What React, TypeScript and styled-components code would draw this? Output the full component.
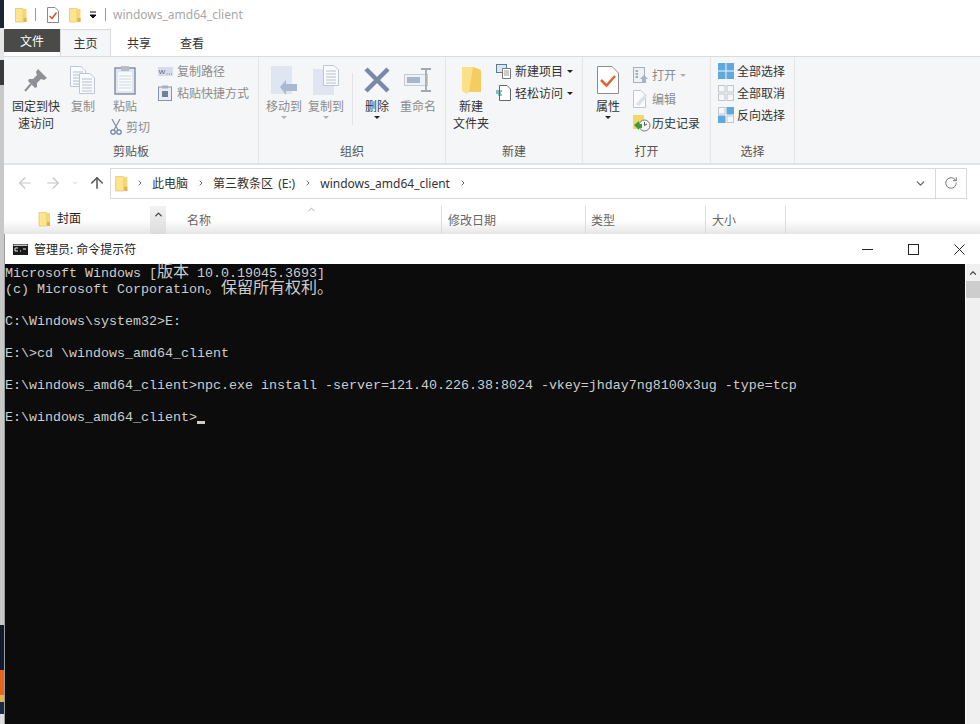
import React from 'react';
import styled, { createGlobalStyle } from 'styled-components';
import { ArrowLeft, ArrowRight, ArrowUp, ChevronDown, ChevronRight, ChevronUp, RotateCw } from 'lucide-react';

const GlobalStyle = createGlobalStyle`
     html, body {
          margin: 0;
          padding: 0;
          background: #0c0c0c;
          overflow: hidden;
     }

     * {
          box-sizing: border-box;
     }
`;

const uiFont = `"Noto Sans", "Noto Sans CJK SC", sans-serif`;

const Page = styled.div`
     display: flex;
     width: 980px;
     height: 724px;
     overflow: hidden;
     font-family: ${uiFont};
     font-size: 12px;
     color: #333;
`;

// sliver of the desktop on the left edge
const DesktopStrip = styled.div`
     flex: 0 0 4px;
     background: linear-gradient(
          #1a2636 0 28px,
          #e6e6e6 28px 60px,
          #3a3a3a 60px 85px,
          #c8c8c8 85px 625px,
          #111a28 625px 670px,
          #e8641c 670px 695px,
          #e8b34a 695px 702px,
          #1a2a44 702px 714px,
          #dddddd 714px
     );
`;

const Main = styled.div`
     flex: 1;
     min-width: 0;
     display: flex;
     flex-direction: column;
`;

const Explorer = styled.div`
     flex: 0 0 234px;
     background: #fff;
     display: flex;
     flex-direction: column;
`;

const TitleBar = styled.div`
     flex: 0 0 29px;
     display: flex;
     align-items: center;
     padding-left: 11px;
`;

const QuickItem = styled.span<{ $gap: number }>`
     display: inline-flex;
     margin-right: ${(p) => p.$gap}px;
`;

const QuickSep = styled.span<{ $gap: number }>`
     width: 1px;
     height: 13px;
     background: #9a9a9a;
     margin-right: ${(p) => p.$gap}px;
`;

const WindowName = styled.span`
     color: #a8a8a8;
     font-size: 12px;
`;

const TabRow = styled.div`
     flex: 0 0 26px;
     display: flex;
     align-items: flex-start;
     position: relative;
     z-index: 1;
`;

const FileTab = styled.div`
     width: 56px;
     height: 23px;
     background: #4a4a48;
     color: #fff;
     display: flex;
     align-items: center;
     justify-content: center;
`;

const Tab = styled.div<{ $active?: boolean; $width: number }>`
     width: ${(p) => p.$width}px;
     height: ${(p) => (p.$active ? 27 : 26)}px;
     display: flex;
     align-items: center;
     justify-content: center;
     color: #333;
     background: ${(p) => (p.$active ? '#f5f6f7' : 'transparent')};
     border: 1px solid ${(p) => (p.$active ? '#dadbdc' : 'transparent')};
     border-bottom: none;
`;

const Ribbon = styled.div`
     flex: 0 0 109px;
     display: flex;
     background: #f5f6f7;
     border-top: 1px solid #dadbdc;
     border-bottom: 2px solid #e2e3e4;
`;

const Group = styled.div<{ $width: number }>`
     width: ${(p) => p.$width}px;
     display: flex;
     flex-direction: column;
     border-right: 1px solid #e4e5e6;
`;

const GroupBody = styled.div<{ $left?: number }>`
     flex: 1;
     min-height: 0;
     display: flex;
     padding: 3px 0 0 ${(p) => p.$left ?? 0}px;
`;

const GroupLabel = styled.div`
     flex: 0 0 21px;
     text-align: center;
     line-height: 20px;
     color: #555;
`;

const LargeButton = styled.div<{ $width: number; $disabled?: boolean }>`
     width: ${(p) => p.$width}px;
     display: flex;
     flex-direction: column;
     align-items: center;
     color: ${(p) => (p.$disabled ? '#8c8c8c' : '#333')};
`;

const LargeIcon = styled.div`
     height: 40px;
     display: flex;
     align-items: center;
     justify-content: center;
`;

const LargeText = styled.div`
     margin-top: -2px;
     line-height: 17px;
     text-align: center;
     white-space: nowrap;
`;

const Caret = styled.span<{ $light?: boolean }>`
     display: block;
     width: 0;
     height: 0;
     border-left: 3px solid transparent;
     border-right: 3px solid transparent;
     border-top: 3px solid ${(p) => (p.$light ? '#b0b0b0' : '#222')};
`;

const ButtonCaret = styled(Caret)`
     margin-top: 1px;
`;

const SmallColumn = styled.div<{ $left?: number; $top?: number; $rowHeight: number }>`
     display: flex;
     flex-direction: column;
     margin-left: ${(p) => p.$left ?? 0}px;
     padding-top: ${(p) => p.$top ?? 0}px;

     > div {
          height: ${(p) => p.$rowHeight}px;
     }
`;

const SmallRow = styled.div<{ $disabled?: boolean; $gap?: number }>`
     display: flex;
     align-items: center;
     gap: ${(p) => p.$gap ?? 4}px;
     white-space: nowrap;
     color: ${(p) => (p.$disabled ? '#8c8c8c' : '#333')};
`;

const PasteColumn = styled.div`
     width: 50px;
     display: flex;
     flex-direction: column;
     align-items: center;
`;

const CutRow = styled(SmallRow)`
     margin: 3px 0 0 10px;
     height: 18px;
`;

const RibbonSep = styled.div`
     width: 1px;
     height: 52px;
     margin: 13px 3px 0 5px;
     background: #e2e3e4;
`;

const AddressRow = styled.div`
     flex: 0 0 41px;
     display: flex;
     align-items: center;
     padding: 0 13px 5px 12px;
     gap: 10px;
     color: #c4c4c4;
`;

const AddressBox = styled.div`
     flex: 1;
     height: 31px;
     margin-left: -6px;
     border: 1px solid #d9d9d9;
     display: flex;
     align-items: center;
     padding-left: 4px;
     gap: 8px;
     color: #333;
`;

const Crumb = styled.span`
     white-space: nowrap;
     padding-right: 1px;
     word-spacing: 2px;
`;

const AddressEnd = styled.div`
     margin-left: auto;
     display: flex;
     align-items: center;
     height: 100%;
     color: #666;
`;

const HistoryToggle = styled.div`
     width: 29px;
     display: flex;
     justify-content: center;
`;

const RefreshBox = styled.div`
     width: 31px;
     height: 100%;
     border-left: 1px solid #d9d9d9;
     display: flex;
     align-items: center;
     justify-content: center;
     color: #666;
`;

const ListHeader = styled.div`
     flex: 1;
     display: flex;
     background: linear-gradient(#fff 50%, #e6e6e6);
`;

const Sidebar = styled.div`
     width: 146px;
     display: flex;
     align-items: flex-start;
     gap: 6px;
     padding: 5px 0 0 34px;
     color: #222;
     line-height: 16px;
`;

const SideScroll = styled.div`
     width: 16px;
     padding-top: 3px;
     background: linear-gradient(#f2f2f2, #dcdcdc);
     display: flex;
     justify-content: center;
     color: #444;
`;

const Column = styled.div<{ $width: number; $pad: number }>`
     position: relative;
     width: ${(p) => p.$width}px;
     padding-left: ${(p) => p.$pad}px;
     display: flex;
     align-items: center;
     color: #666;
     border-right: 1px solid #dcdcdc;
`;

const SortMark = styled.span`
     position: absolute;
     left: 140px;
     top: -2px;
     display: flex;
     color: #8a8a8a;
`;

const Console = styled.div`
     flex: 1;
     min-height: 0;
     display: flex;
     flex-direction: column;
     background: #fff;
     border-left: 1px solid #9c9c9c;
`;

const ConsoleTitle = styled.div`
     flex: 0 0 30px;
     display: flex;
     align-items: center;
     padding-left: 8px;
     gap: 6px;
     color: #222;
`;

const WindowControls = styled.div`
     margin-left: auto;
     display: flex;
     height: 100%;
`;

const ControlButton = styled.div`
     width: 46px;
     padding-left: 4px;
     display: flex;
     align-items: center;
     justify-content: center;
`;

const ConsoleBody = styled.div`
     flex: 1;
     min-height: 0;
     display: flex;
`;

const Screen = styled.div`
     flex: 1;
     padding-top: 2px;
     background: #0c0c0c;
     color: #cccccc;
     font-family: "Liberation Mono", "Noto Sans CJK SC", monospace;
     font-size: 13.333px;
`;

const Line = styled.div`
     height: 16px;
     line-height: 16px;
     white-space: pre;
`;

// line-height 0 keeps the CJK font from pushing the baseline down
const Cjk = styled.span`
     font-family: "Noto Sans CJK SC", sans-serif;
     font-size: 16px;
     line-height: 0;
`;

const Cursor = styled.span`
     display: inline-block;
     width: 8px;
     height: 3px;
     vertical-align: -3px;
     background: #ccc;
`;

const ScrollBar = styled.div`
     flex: 0 0 15px;
     background: #f0f0f0;
     border-left: 1px solid #fff;
     display: flex;
     flex-direction: column;
`;

const ScrollArrow = styled.div`
     height: 17px;
     display: flex;
     align-items: center;
     justify-content: center;
     color: #555;
`;

const ScrollThumb = styled.div`
     height: 17px;
     background: #cdcdcd;
`;

const FolderIcon = ({ w = 12, h = 16 }: { w?: number; h?: number }) => (
     <svg width={w} height={h} viewBox='0 0 12 16'>
          <path d='M0.5 1.5 H8 V15 H0.5 Z' fill='#fde58f' stroke='#e6c56e' strokeWidth='0.8' />
          <path d='M8 2 H11.5 V15 H8 Z' fill='#f6d774' />
          <path d='M8.5 11 H11.5 V15 H8.5 Z' fill='#e0b24d' />
     </svg>
);

const CheckDoc = () => (
     <svg width='12' height='16' viewBox='0 0 12 16'>
          <path d='M0.5 0.5 H8 L11.5 4 V15.5 H0.5 Z' fill='#fff' stroke='#8a8a8a' />
          <path d='M2.5 9 L5 11.5 L9.5 5.5' fill='none' stroke='#d9562b' strokeWidth='1.5' />
     </svg>
);

const PinIcon = () => (
     <svg width='24' height='24' viewBox='0 0 24 24'>
          <path d='M14 1 L23 10 L20 12 L17 11 L13 15 L13 19 L11 20 L4 13 L5 11 L9 11 L13 7 L12 4 Z' fill='#8e9096' />
          <path d='M7 16 L1 23' stroke='#8e9096' strokeWidth='2' />
     </svg>
);

const Pages = ({ x, y }: { x: number; y: number }) => (
     <g transform={`translate(${x} ${y})`}>
          <path d='M0.5 0.5 H11 L15.5 5 V20.5 H0.5 Z' fill='#fafbfd' stroke='#bcc6d6' />
          <path d='M3 6 H13 M3 9 H13 M3 12 H13 M3 15 H13 M3 18 H13' stroke='#b4bfd0' strokeWidth='1' />
     </g>
);

const CopyIcon = () => (
     <svg width='26' height='28' viewBox='0 0 26 28'>
          <Pages x={0} y={0} />
          <Pages x={9} y={7} />
     </svg>
);

const PasteIcon = () => (
     <svg width='22' height='30' viewBox='0 0 22 30'>
          <rect x='1' y='3' width='20' height='26' fill='#dfe6f2' stroke='#7f8ba0' strokeWidth='1.4' />
          <rect x='4' y='7' width='14' height='19' fill='#f8fafd' />
          <path d='M5 11 H17 M5 14 H17 M5 17 H17 M5 20 H17 M5 23 H17' stroke='#cfd8e6' />
          <rect x='7' y='1' width='8' height='5' fill='#b9bdc4' />
     </svg>
);

const ScissorsIcon = () => (
     <svg width='12' height='16' viewBox='0 0 12 16'>
          <path d='M2 0 L8 11 M10 0 L4 11' stroke='#8b93a2' strokeWidth='1.3' fill='none' />
          <circle cx='3' cy='13' r='2.2' fill='none' stroke='#6f88ab' strokeWidth='1.3' />
          <circle cx='9' cy='13' r='2.2' fill='none' stroke='#6f88ab' strokeWidth='1.3' />
     </svg>
);

const PathIcon = () => (
     <svg width='15' height='9' viewBox='0 0 15 9'>
          <rect width='15' height='9' fill='#d6dcea' />
          <path d='M1 3 L2.5 7 L4 3 L5.5 7 L7 3 M8.5 7 H9.5 M11 7 H12 M13 7 H14' stroke='#6e7484' fill='none' strokeWidth='0.8' />
     </svg>
);

const ShortcutIcon = () => (
     <svg width='14' height='16' viewBox='0 0 14 16'>
          <rect x='0.5' y='2' width='13' height='13.5' fill='#e8edf5' stroke='#8a96a8' />
          <rect x='4' y='0.5' width='6' height='3' fill='#a9b0bb' />
          <rect x='4' y='6' width='6' height='6' fill='#6f8199' />
     </svg>
);

const MoveIcon = () => (
     <svg width='27' height='29' viewBox='0 0 27 29'>
          <rect width='21' height='28' fill='#dfe6f1' />
          <path d='M9 21 L15 14 V18 H26 V25 H15 V29 Z' fill='#a9b9cf' />
     </svg>
);

const CopyToIcon = () => (
     <svg width='27' height='30' viewBox='0 0 27 30'>
          <rect y='4' width='21' height='26' fill='#dfe6f1' />
          <Pages x={10} y={0} />
     </svg>
);

const DeleteIcon = () => (
     <svg width='26' height='26' viewBox='0 0 26 26'>
          <path d='M2 2 L24 24 M24 2 L2 24' stroke='#7b87a8' strokeWidth='4.5' />
     </svg>
);

const RenameIcon = () => (
     <svg width='28' height='24' viewBox='0 0 28 24'>
          <rect x='0.5' y='6.5' width='23' height='11' fill='#eef1f6' stroke='#c5ccd8' />
          <rect x='3' y='9' width='13' height='6' fill='#a9b6cc' />
          <path d='M17 1 H27 M22 1 V23 M17 23 H27' stroke='#a3a8b0' strokeWidth='1.8' fill='none' />
     </svg>
);

const NewFolderIcon = () => (
     <svg width='19' height='27' viewBox='0 0 19 27'>
          <path d='M0 0 H11 L19 3 V25 L7 25 L5 27 L0 24 Z' fill='#fbe08a' />
          <path d='M11 0 L19 3 V25 H7 Z' fill='#f4cc60' />
     </svg>
);

const NewItemIcon = () => (
     <svg width='15' height='15' viewBox='0 0 15 15'>
          <rect x='0.5' y='0.5' width='10' height='8' fill='#d7e6f5' stroke='#5c7a94' />
          <path d='M6.5 4.5 H14.5 V14.5 H6.5 Z' fill='#fff' stroke='#777' />
          <path d='M8 7 H13 M8 9 H13 M8 11 H13' stroke='#999' />
     </svg>
);

const EasyAccessIcon = () => (
     <svg width='15' height='16' viewBox='0 0 15 16'>
          <path d='M3.5 0.5 H11 L14.5 4 V15.5 H3.5 Z' fill='#fff' stroke='#666' />
          <path d='M0 6 H6 M0 8 H5 M2 10 H6' stroke='#1e7b8c' strokeWidth='1.1' />
     </svg>
);

const PropertiesIcon = () => (
     <svg width='22' height='28' viewBox='0 0 22 28'>
          <path d='M0.5 0.5 H15 L21.5 7 V27.5 H0.5 Z' fill='#fff' stroke='#8c8c8c' />
          <path d='M4 14 L9.5 19.5 L18 10' fill='none' stroke='#d9693a' strokeWidth='2.6' />
     </svg>
);

const OpenIcon = () => (
     <svg width='15' height='16' viewBox='0 0 15 16'>
          <rect x='0.5' y='0.5' width='11' height='15' fill='#eef1f6' stroke='#a9afb9' />
          <path d='M2.5 4 H5 M2.5 7 H5 M2.5 10 H5' stroke='#8d97a8' strokeWidth='1.4' />
          <path d='M11 8 L15 12 H13 V16 H9 V12 H7 Z' fill='#a9b3c2' />
     </svg>
);

const EditIcon = () => (
     <svg width='15' height='18' viewBox='0 0 15 18'>
          <path d='M0.5 0.5 H8 L12.5 5 V17.5 H0.5 Z' fill='#fbfcfe' stroke='#bcc6d6' />
          <path d='M3 14 L11 5 L14 7 L6 16 Z' fill='#d8e1ee' />
     </svg>
);

const HistoryIcon = () => (
     <svg width='18' height='17' viewBox='0 0 18 17'>
          <rect width='11' height='14' fill='#f2d76d' />
          <circle cx='11.5' cy='10.5' r='5.5' fill='#f4f4f4' stroke='#777' />
          <path d='M11.5 7 V10.5 L14 9' stroke='#555' fill='none' />
          <path d='M1 10 L6 6 V9 H9 V13 H6 V15 Z' fill='#3f9a3c' />
     </svg>
);

const Tiles = ({ on, off }: { on: number[]; off: number[] }) => (
     <svg width='16' height='16' viewBox='0 0 16 16'>
          {[0, 1, 2, 3].map((i) => {
               const x = i % 2 === 0 ? 0 : 8.5;
               const y = i < 2 ? 0 : 8.5;
               return on.includes(i) ? (
                    <rect key={i} x={x} y={y} width='7.5' height='7.5' fill='#5fa9de' />
               ) : off.includes(i) ? (
                    <rect key={i} x={x + 0.5} y={y + 0.5} width='6.5' height='6.5' fill='none' stroke='#c2c6cc' />
               ) : null;
          })}
     </svg>
);

const ConsoleIcon = () => (
     <svg width='15' height='11' viewBox='0 0 15 11'>
          <rect width='15' height='11' fill='#1a1a1a' />
          <rect x='0.5' y='0.5' width='14' height='1.5' fill='#c4c4c4' />
          <path d='M2 4 H5 M2 7 H5 M2 4 V7 M7 7 H8 M10 5 H13' stroke='#e8e8e8' strokeWidth='1' />
     </svg>
);

const App: React.FC = () => {
     return (
          <Page>
               <GlobalStyle />
               <DesktopStrip />
               <Main>
                    <Explorer>
                         <TitleBar>
                              <QuickItem $gap={8}><FolderIcon /></QuickItem>
                              <QuickSep $gap={11} />
                              <QuickItem $gap={10}><CheckDoc /></QuickItem>
                              <QuickItem $gap={8}><FolderIcon /></QuickItem>
                              <QuickItem $gap={8}>
                                   <svg width='8' height='8' viewBox='0 0 8 8'>
                                        <path d='M1 1 H7 M1 4 H7 L4 7 Z' stroke='#111' fill='#111' />
                                   </svg>
                              </QuickItem>
                              <QuickSep $gap={7} />
                              <WindowName>windows_amd64_client</WindowName>
                         </TitleBar>

                         <TabRow>
                              <FileTab>文件</FileTab>
                              <Tab $active $width={51}>主页</Tab>
                              <Tab $width={56}>共享</Tab>
                              <Tab $width={50}>查看</Tab>
                         </TabRow>

                         <Ribbon>
                              <Group $width={255}>
                                   <GroupBody $left={2}>
                                        <LargeButton $width={60}>
                                             <LargeIcon><PinIcon /></LargeIcon>
                                             <LargeText>固定到快<br />速访问</LargeText>
                                        </LargeButton>
                                        <LargeButton $width={34} $disabled>
                                             <LargeIcon><CopyIcon /></LargeIcon>
                                             <LargeText>复制</LargeText>
                                        </LargeButton>
                                        <PasteColumn>
                                             <LargeButton $width={50} $disabled>
                                                  <LargeIcon><PasteIcon /></LargeIcon>
                                                  <LargeText>粘贴</LargeText>
                                             </LargeButton>
                                             <CutRow $disabled>
                                                  <ScissorsIcon />
                                                  <span>剪切</span>
                                             </CutRow>
                                        </PasteColumn>
                                        <SmallColumn $left={8} $rowHeight={22}>
                                             <SmallRow $disabled><PathIcon /><span>复制路径</span></SmallRow>
                                             <SmallRow $disabled $gap={5}><ShortcutIcon /><span>粘贴快捷方式</span></SmallRow>
                                        </SmallColumn>
                                   </GroupBody>
                                   <GroupLabel>剪贴板</GroupLabel>
                              </Group>

                              <Group $width={187}>
                                   <GroupBody $left={4}>
                                        <LargeButton $width={42} $disabled>
                                             <LargeIcon><MoveIcon /></LargeIcon>
                                             <LargeText>移动到</LargeText>
                                             <ButtonCaret $light />
                                        </LargeButton>
                                        <LargeButton $width={42} $disabled>
                                             <LargeIcon><CopyToIcon /></LargeIcon>
                                             <LargeText>复制到</LargeText>
                                             <ButtonCaret $light />
                                        </LargeButton>
                                        <RibbonSep />
                                        <LargeButton $width={42}>
                                             <LargeIcon><DeleteIcon /></LargeIcon>
                                             <LargeText>删除</LargeText>
                                             <ButtonCaret />
                                        </LargeButton>
                                        <LargeButton $width={40} $disabled>
                                             <LargeIcon><RenameIcon /></LargeIcon>
                                             <LargeText>重命名</LargeText>
                                        </LargeButton>
                                   </GroupBody>
                                   <GroupLabel>组织</GroupLabel>
                              </Group>

                              <Group $width={137}>
                                   <GroupBody $left={1}>
                                        <LargeButton $width={48}>
                                             <LargeIcon><NewFolderIcon /></LargeIcon>
                                             <LargeText>新建<br />文件夹</LargeText>
                                        </LargeButton>
                                        <SmallColumn $left={1} $rowHeight={22}>
                                             <SmallRow><NewItemIcon /><span>新建项目</span><Caret /></SmallRow>
                                             <SmallRow><EasyAccessIcon /><span>轻松访问</span><Caret /></SmallRow>
                                        </SmallColumn>
                                   </GroupBody>
                                   <GroupLabel>新建</GroupLabel>
                              </Group>

                              <Group $width={128}>
                                   <GroupBody $left={4}>
                                        <LargeButton $width={42}>
                                             <LargeIcon><PropertiesIcon /></LargeIcon>
                                             <LargeText>属性</LargeText>
                                             <ButtonCaret />
                                        </LargeButton>
                                        <SmallColumn $left={4} $top={3} $rowHeight={24}>
                                             <SmallRow $disabled><OpenIcon /><span>打开</span><Caret $light /></SmallRow>
                                             <SmallRow $disabled><EditIcon /><span>编辑</span></SmallRow>
                                             <SmallRow $gap={1}><HistoryIcon /><span>历史记录</span></SmallRow>
                                        </SmallColumn>
                                   </GroupBody>
                                   <GroupLabel>打开</GroupLabel>
                              </Group>

                              <Group $width={84}>
                                   <GroupBody $left={7}>
                                        <SmallColumn $rowHeight={22}>
                                             <SmallRow $gap={3}><Tiles on={[0, 1, 2, 3]} off={[]} /><span>全部选择</span></SmallRow>
                                             <SmallRow $gap={3}><Tiles on={[]} off={[0, 1, 2, 3]} /><span>全部取消</span></SmallRow>
                                             <SmallRow $gap={3}><Tiles on={[1, 2]} off={[0, 3]} /><span>反向选择</span></SmallRow>
                                        </SmallColumn>
                                   </GroupBody>
                                   <GroupLabel>选择</GroupLabel>
                              </Group>
                         </Ribbon>

                         <AddressRow>
                              <ArrowLeft size={18} strokeWidth={1.5} />
                              <ArrowRight size={18} strokeWidth={1.5} />
                              <ChevronDown size={6} strokeWidth={3} />
                              <ArrowUp size={18} strokeWidth={2} color='#555' />
                              <AddressBox>
                                   <FolderIcon w={13} h={17} />
                                   <ChevronRight size={8} strokeWidth={3} color='#666' />
                                   <Crumb>此电脑</Crumb>
                                   <ChevronRight size={8} strokeWidth={3} color='#666' />
                                   <Crumb>第三教条区 (E:)</Crumb>
                                   <ChevronRight size={8} strokeWidth={3} color='#666' />
                                   <Crumb>windows_amd64_client</Crumb>
                                   <ChevronRight size={8} strokeWidth={3} color='#666' />
                                   <AddressEnd>
                                        <HistoryToggle><ChevronDown size={13} strokeWidth={2.5} /></HistoryToggle>
                                        <RefreshBox><RotateCw size={14} strokeWidth={1.5} /></RefreshBox>
                                   </AddressEnd>
                              </AddressBox>
                         </AddressRow>

                         <ListHeader>
                              <Sidebar>
                                   <FolderIcon w={13} h={16} />
                                   <span>封面</span>
                              </Sidebar>
                              <SideScroll><ChevronUp size={11} strokeWidth={3} /></SideScroll>
                              <Column $width={276} $pad={21}>
                                   名称
                                   <SortMark><ChevronUp size={11} strokeWidth={1.5} /></SortMark>
                              </Column>
                              <Column $width={144} $pad={6}>修改日期</Column>
                              <Column $width={120} $pad={5}>类型</Column>
                              <Column $width={80} $pad={6}>大小</Column>
                         </ListHeader>
                    </Explorer>

                    <Console>
                         <ConsoleTitle>
                              <ConsoleIcon />
                              <span>管理员: 命令提示符</span>
                              <WindowControls>
                                   <ControlButton>
                                        <svg width='11' height='11' viewBox='0 0 11 11'>
                                             <path d='M0 5.5 H11' stroke='#222' />
                                        </svg>
                                   </ControlButton>
                                   <ControlButton>
                                        <svg width='11' height='11' viewBox='0 0 11 11'>
                                             <rect x='0.5' y='0.5' width='10' height='10' fill='none' stroke='#222' />
                                        </svg>
                                   </ControlButton>
                                   <ControlButton>
                                        <svg width='11' height='11' viewBox='0 0 11 11'>
                                             <path d='M0.5 0.5 L10.5 10.5 M10.5 0.5 L0.5 10.5' stroke='#222' />
                                        </svg>
                                   </ControlButton>
                              </WindowControls>
                         </ConsoleTitle>

                         <ConsoleBody>
                              <Screen>
                                   <Line>Microsoft Windows [<Cjk>版本</Cjk> 10.0.19045.3693]</Line>
                                   <Line>(c) Microsoft Corporation<Cjk>。保留所有权利。</Cjk></Line>
                                   <Line> </Line>
                                   <Line>C:\Windows\system32&gt;E:</Line>
                                   <Line> </Line>
                                   <Line>E:\&gt;cd \windows_amd64_client</Line>
                                   <Line> </Line>
                                   <Line>E:\windows_amd64_client&gt;npc.exe install -server=121.40.226.38:8024 -vkey=jhday7ng8100x3ug -type=tcp</Line>
                                   <Line> </Line>
                                   <Line>E:\windows_amd64_client&gt;<Cursor /></Line>
                              </Screen>
                              <ScrollBar>
                                   <ScrollArrow><ChevronUp size={10} strokeWidth={3} /></ScrollArrow>
                                   <ScrollThumb />
                              </ScrollBar>
                         </ConsoleBody>
                    </Console>
               </Main>
          </Page>
     );
};

export default App;
